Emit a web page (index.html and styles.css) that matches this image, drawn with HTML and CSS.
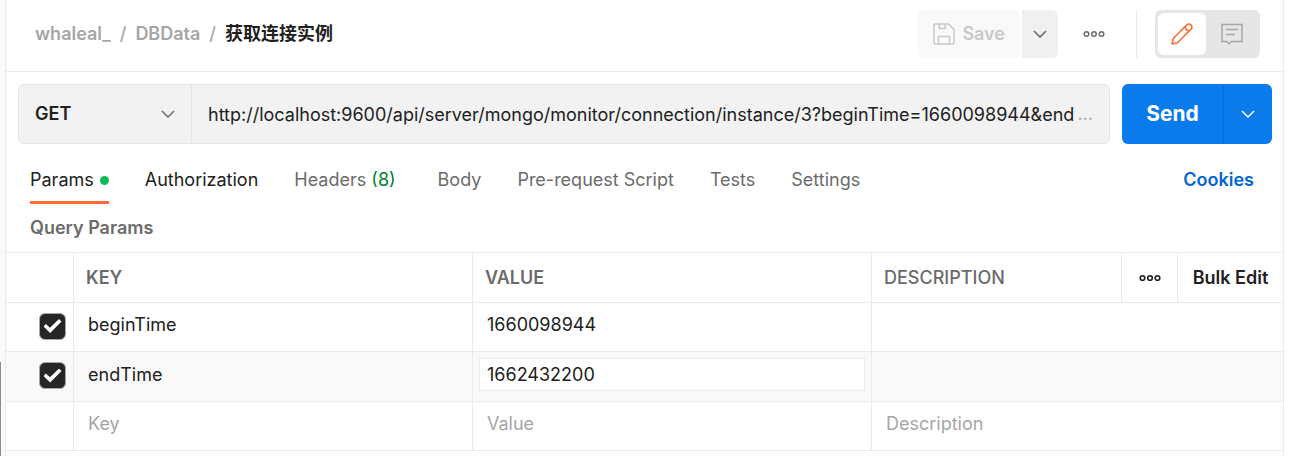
FILE: index.html
```html
<!DOCTYPE html>
<html lang="en">
<head>
<meta charset="utf-8">
<title>获取连接实例</title>
<link rel="stylesheet" href="styles.css">
</head>
<body>
<div class="gutter"><div class="gutter-thumb"></div></div>
<main class="panel">
  <header class="topbar">
    <nav class="crumbs" aria-label="Breadcrumb">
      <a href="#">whaleal_</a><span>/</span><a href="#">DBData</a><span>/</span><strong>获取连接实例</strong>
    </nav>
    <div class="actions">
      <div class="save-group">
        <button class="save" type="button" disabled>
          <svg width="22" height="22" viewBox="0 0 22 22" fill="none" stroke="currentColor" stroke-width="1.5" stroke-linejoin="round"><path d="M2 1h13.500l5.500 5.500V20a1 1 0 0 1-1 1H2a1 1 0 0 1-1-1V2a1 1 0 0 1 1-1z"/><path d="M6.200 1v4.500h6V1M5.500 21v-7.500h11V21"/></svg>
          Save
        </button>
        <button class="save-more" type="button" aria-label="Save options">
          <svg width="14" height="8" viewBox="0 0 14 8" fill="none" stroke="currentColor" stroke-width="1.6"><path d="M1 1l6 6 6-6"/></svg>
        </button>
      </div>
      <button class="more" type="button" aria-label="More actions">
        <svg width="22" height="8" viewBox="0 0 22 8" fill="none" stroke="currentColor" stroke-width="1.5"><circle cx="3.500" cy="4" r="2.300"/><circle cx="11" cy="4" r="2.300"/><circle cx="18.500" cy="4" r="2.300"/></svg>
      </button>
      <div class="modes">
        <button class="mode mode-on" type="button" aria-label="Edit">
          <svg width="22" height="22" viewBox="0 0 22 22" fill="none" stroke="currentColor" stroke-width="1.600" stroke-linejoin="round"><path d="M1 21l1.200-5.500L15.800 1.900a2.900 2.900 0 0 1 4.200 0 2.900 2.900 0 0 1 0 4.200L6.400 19.700z"/><path d="M14.200 3.500l1 3.200 3.200 1"/></svg>
        </button>
        <button class="mode" type="button" aria-label="Comments">
          <svg width="22" height="22" viewBox="0 0 22 22" fill="none" stroke="currentColor" stroke-width="1.500"><path d="M1 1.500h20v17h-10.500l-2.500 2.300-2.500-2.300H1z"/><path d="M5 6.500h12M5 11.500h9"/></svg>
        </button>
      </div>
    </div>
  </header>

  <form class="request">
    <div class="request-box">
      <div class="method">
        <select class="method-select" aria-label="Method"><option>GET</option><option>POST</option></select>
        <svg class="method-arrow" width="14" height="8" viewBox="0 0 14 8" fill="none" stroke="currentColor" stroke-width="1.5"><path d="M1 1l6 6 6-6"/></svg>
      </div>
      <input class="url" type="text" aria-label="Request URL" value="http://localhost:9600/api/server/mongo/monitor/connection/instance/3?beginTime=1660098944&amp;endTime=1662432200">
      <span class="url-rest">...</span>
    </div>
    <div class="send-group">
      <button class="send" type="button">Send</button>
      <button class="send-more" type="button" aria-label="Send options">
        <svg width="14" height="8" viewBox="0 0 14 8" fill="none" stroke="currentColor" stroke-width="1.5"><path d="M1 1l6 6 6-6"/></svg>
      </button>
    </div>
  </form>

  <div class="tabbar">
    <div class="tabs" role="tablist">
      <button class="tab tab-active" type="button" role="tab" aria-selected="true">Params<i class="dot"></i></button>
      <button class="tab tab-set" type="button" role="tab">Authorization</button>
      <button class="tab tab-counted" type="button" role="tab">Headers <span class="count">(8)</span></button>
      <button class="tab" type="button" role="tab">Body</button>
      <button class="tab" type="button" role="tab">Pre-request Script</button>
      <button class="tab" type="button" role="tab">Tests</button>
      <button class="tab" type="button" role="tab">Settings</button>
    </div>
    <a class="cookies" href="#">Cookies</a>
  </div>

  <h2 class="section-title">Query Params</h2>

  <table class="params">
    <colgroup><col class="col-check"><col><col><col class="col-desc"><col class="col-more"><col class="col-bulk"></colgroup>
    <thead>
      <tr>
        <th></th><th>KEY</th><th>VALUE</th><th class="desc-head">DESCRIPTION</th>
        <th class="tool"><button class="columns" type="button" aria-label="Columns">
          <svg width="22" height="8" viewBox="0 0 22 8" fill="none" stroke="currentColor" stroke-width="1.600"><circle cx="3.500" cy="4" r="2.300"/><circle cx="11" cy="4" r="2.300"/><circle cx="18.500" cy="4" r="2.300"/></svg>
        </button></th>
        <th class="tool"><button class="bulk" type="button">Bulk Edit</button></th>
      </tr>
    </thead>
    <tbody>
      <tr>
        <td class="check-cell"><input class="check" type="checkbox" checked aria-label="Use beginTime"></td>
        <td><input class="field" type="text" aria-label="Key" value="beginTime"></td>
        <td><input class="field" type="text" aria-label="Value" value="1660098944"></td>
        <td colspan="3"><input class="field" type="text" aria-label="Description"></td>
      </tr>
      <tr class="row-hover">
        <td class="check-cell"><input class="check" type="checkbox" checked aria-label="Use endTime"></td>
        <td><input class="field" type="text" aria-label="Key" value="endTime"></td>
        <td><input class="field field-edit" type="text" aria-label="Value" value="1662432200"></td>
        <td colspan="3"><input class="field" type="text" aria-label="Description"></td>
      </tr>
      <tr>
        <td></td>
        <td><input class="field" type="text" aria-label="New key" placeholder="Key"></td>
        <td><input class="field" type="text" aria-label="New value" placeholder="Value"></td>
        <td colspan="3"><input class="field" type="text" aria-label="New description" placeholder="Description"></td>
      </tr>
    </tbody>
  </table>
</main>
</body>
</html>
```
FILE: styles.css
```css
* { box-sizing: border-box; }

body {
  display: flex;
  min-height: 100vh;
  margin: 0;
  padding-right: 8px;
  background: #fff;
  color: #212121;
  font-family: Inter, "Noto Sans CJK SC", sans-serif;
  font-size: 18px;
  line-height: 24px;
}

button, input, select {
  margin: 0;
  padding: 0;
  border: 0;
  background: none;
  color: inherit;
  font: inherit;
}

a { color: inherit; text-decoration: none; }
svg { display: block; flex: none; }

.gutter {
  display: flex;
  align-items: flex-end;
  width: 5px;
  background: #fafafa;
}
.gutter-thumb { width: 1px; height: 94px; background: #8c8c8c; }

.panel {
  flex: 1;
  min-width: 0;
  border: solid #ebebeb;
  border-width: 0 1px;
}

.topbar {
  display: flex;
  align-items: center;
  justify-content: space-between;
  padding: 10px 23px 13px 29px;
  border-bottom: 1px solid #ebebeb;
}
.crumbs { display: flex; gap: 9px; color: #a6a6a6; font-weight: 600; }
.crumbs span { font-weight: 500; }
.crumbs strong { color: #212121; font-weight: 700; }

.actions { display: flex; align-items: center; }
.save-group { display: flex; gap: 2px; height: 48px; }
.save {
  display: flex;
  align-items: center;
  gap: 7px;
  padding: 0 15px;
  border-radius: 6px;
  background: #f9f9f9;
  color: #c8c8c8;
  font-weight: 600;
}
.save-more {
  display: grid;
  place-items: center;
  width: 36px;
  border-radius: 0 6px 6px 0;
  background: #f0f0f0;
  color: #6b6b6b;
}
.more { margin: 0 31px 0 25px; color: #6b6b6b; }
.modes {
  display: flex;
  position: relative;
  height: 48px;
  margin-left: 19px;
  padding: 3px;
  border-radius: 6px;
  background: #e6e6e6;
}
.modes::before {
  content: "";
  position: absolute;
  left: -19px;
  width: 1px;
  top: 0;
  bottom: 0;
  background: #ebebeb;
}
.mode {
  display: grid;
  place-items: center;
  width: 48px;
  border-radius: 6px;
  color: #a6a6a6;
}
.mode + .mode { width: 51px; }
.mode-on { background: #fff; color: #ff6c37; }

.request { display: flex; gap: 12px; padding: 12px 11px 0 12px; }
.request-box {
  display: flex;
  flex: 1;
  align-items: center;
  min-width: 0;
  height: 60px;
  padding-right: 16px;
  border: 1px solid #e6e6e6;
  border-radius: 6px;
  background: #f2f2f2;
}
.method {
  display: grid;
  align-items: center;
  width: 173px;
  height: 100%;
  border-right: 1px solid #e6e6e6;
}
.method-select {
  grid-area: 1 / 1;
  height: 100%;
  padding-left: 16px;
  appearance: none;
  font-weight: 600;
}
.method-arrow {
  grid-area: 1 / 1;
  justify-self: end;
  margin-right: 16px;
  color: #6b6b6b;
  pointer-events: none;
}
.url { flex: 1; min-width: 0; height: 100%; margin-left: 16px; }
.url-rest { padding-left: 2px; color: #a6a6a6; }

.send-group { display: flex; }
.send, .send-more { background: #097bed; color: #fff; }
.send {
  width: 101px;
  border-radius: 6px 0 0 6px;
  font-size: 21px;
  font-weight: 700;
}
.send-more {
  display: grid;
  place-items: center;
  width: 49px;
  border-left: 1px solid #0a6dd6;
  border-radius: 0 6px 6px 0;
}

.tabbar {
  display: flex;
  align-items: flex-start;
  justify-content: space-between;
  padding: 24px 29px 0 24px;
}
.tabs { display: flex; gap: 36px; }
.tab {
  padding-bottom: 9px;
  border-bottom: 3px solid transparent;
  color: #6b6b6b;
  white-space: pre;
}
.tab-active { display: flex; align-items: center; gap: 6px; border-color: #ff6c37; color: #212121; }
.tab-set { color: #212121; }
.tab-counted { padding-right: 6px; }
.dot { width: 9px; height: 9px; border-radius: 50%; background: #0cbb52; }
.count { color: #007f31; }
.cookies { color: #0265d2; font-weight: 600; }

.section-title {
  margin: 0;
  padding: 12px 24px;
  color: #6b6b6b;
  font-size: 18px;
  font-weight: 600;
}

.params {
  width: 100%;
  table-layout: fixed;
  border-spacing: 0;
  border-bottom: 1px solid #ebebeb;
}
.col-check { width: 68px; }
.col-desc { width: 250px; }
.col-more { width: 56px; }
.col-bulk { width: 105px; }
.params th, .params td {
  border-top: 1px solid #ebebeb;
  border-right: 1px solid #ebebeb;
  text-align: left;
}
.params th:last-child, .params td:last-child { border-right: 0; }
.params th { height: 50px; padding: 0 12px; color: #6b6b6b; font-weight: 600; }
.params td { height: 49px; padding: 5px 6px 0; vertical-align: top; }
.params .desc-head { font-weight: 500; }
.params .tool { padding: 0; }
.columns, .bulk { display: grid; place-items: center; width: 100%; color: #212121; font-weight: 600; }
.params .row-hover td { height: 50px; padding-top: 6px; background: #f9f9f9; }
.params .check-cell { padding: 0 7px 2px 0; text-align: right; vertical-align: middle; }
.params .row-hover .check-cell { padding-top: 0; }

.field {
  display: block;
  width: 100%;
  height: 33px;
  padding: 0 7px;
  border: 1px solid transparent;
}
.field::placeholder { color: #a6a6a6; opacity: 1; }
.field-edit { border-color: #ebebeb; background: #fff; }

.check {
  display: inline-grid;
  place-items: center;
  width: 27px;
  height: 27px;
  border: 1px solid #a6a6a6;
  border-radius: 6px;
  background: #262626;
  appearance: none;
  vertical-align: middle;
}
.check::before {
  content: "";
  width: 18px;
  height: 14px;
  background: #fff;
  clip-path: polygon(0 54%, 13% 36%, 36% 62%, 86% 0, 100% 18%, 37% 100%);
}
```
